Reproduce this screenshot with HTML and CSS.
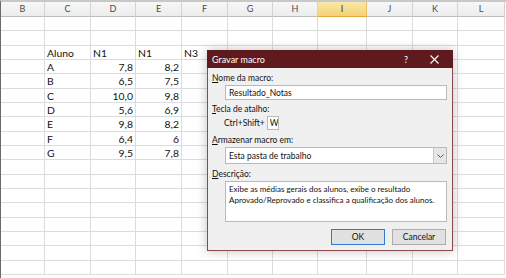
FILE: index.html
```html
<!DOCTYPE html>
<html lang="pt-BR">
<head>
  <meta charset="UTF-8" />
  <title>Gravar macro</title>
  <link rel="stylesheet" href="styles.css">
</head>
<body>
  <div class="sheet">
    <div class="col-head">
      <div>B</div><div>C</div><div>D</div><div>E</div><div>F</div><div>G</div>
      <div>H</div><div class="sel">I</div><div>J</div><div>K</div><div>L</div>
    </div>
    <div class="cells" id="cells"></div>
  </div>

  <!-- Gravar macro dialog -->
  <div class="dialog" role="dialog" aria-labelledby="dlg-title">
    <div class="title-bar">
      <span id="dlg-title">Gravar macro</span>
      <span class="help">?</span>
      <svg class="close" width="9" height="9" viewBox="0 0 9 9">
        <path d="M0.5 0.5 L8.5 8.5 M8.5 0.5 L0.5 8.5" stroke="#fff" stroke-width="1.1" fill="none"/>
      </svg>
    </div>
    <div class="dlg-body">
      <label class="lbl"><u>N</u>ome da macro:</label>
      <input class="field" type="text" value="Resultado_Notas">

      <label class="lbl"><u>T</u>ecla de atalho:</label>
      <div class="shortcut">
        <span>Ctrl+Shift+</span>
        <input class="key" type="text" value="W">
      </div>

      <label class="lbl"><u>A</u>rmazenar macro em:</label>
      <div class="select">
        <span>Esta pasta de trabalho</span>
        <span class="drop">
          <svg width="7" height="4" viewBox="0 0 7 4"><path d="M0.5 0.5 L3.5 3.5 L6.5 0.5" stroke="#555" fill="none"/></svg>
        </span>
      </div>

      <label class="lbl"><u>D</u>escrição:</label>
      <div class="desc">
        <div>Exibe as médias gerais dos alunos, exibe o resultado</div>
        <div>Aprovado/Reprovado e classifica a qualificação dos alunos.</div>
      </div>

      <div class="buttons">
        <button class="btn default">OK</button>
        <button class="btn">Cancelar</button>
      </div>
    </div>
  </div>

  <script>
    const rows = [
      [], [],
      ['', 'Aluno', 'N1', 'N1', 'N3', 'N4', 'Média', 'Resultado'],
      ['', 'A', '7,8', '8,2'],
      ['', 'B', '6,5', '7,5'],
      ['', 'C', '10,0', '9,8'],
      ['', 'D', '5,6', '6,9'],
      ['', 'E', '9,8', '8,2'],
      ['', 'F', '6,4', '6'],
      ['', 'G', '9,5', '7,8']
    ];
    const cells = document.getElementById('cells');
    for (let r = 0; r < 18; r++) {
      const data = rows[r] || [];
      for (let c = 0; c < 11; c++) {
        const cell = document.createElement('div');
        const v = data[c] || '';
        if (/^[\d,]+$/.test(v)) cell.className = 'num';
        cell.textContent = v;
        cells.appendChild(cell);
      }
    }
  </script>
</body>
</html>
```

FILE: styles.css
```css
body {
  margin: 0;
  background: #fff;
  overflow: hidden;
}
.sheet {
  border-top: 2px solid #c8c8c8;
  border-left: 1px solid #6a6a6a;
  height: 276px;
  font-family: 'Lato', 'Liberation Sans', sans-serif;
}
.col-head, .cells {
  display: grid;
  grid-template-columns: 44px 46px 45px 46px 46px 45px 45px 49px 46px 45px 47px;
}
.col-head div {
  box-sizing: border-box;
  height: 15px;
  line-height: 14px;
  text-align: center;
  font-size: 9px;
  color: #4a4a4a;
  background: linear-gradient(#f7f7f7, #ececec);
  border-right: 1px solid #d4d4d4;
  border-bottom: 1px solid #bdbdbd;
}
.col-head div.sel {
  background: linear-gradient(#fbe7a8, #f5d273);
  border-bottom: 1px solid #e2a734;
  border-right-color: #e9c064;
  color: #333;
}
.cells {
  grid-auto-rows: 14.33px;
}
.cells div {
  box-sizing: border-box;
  border-right: 1px solid #dcdcdc;
  border-bottom: 1px solid #dcdcdc;
  font-size: 10.4px;
  line-height: 15px;
  padding: 0 2px;
  color: #111;
  white-space: nowrap;
  overflow: hidden;
}
.cells div.num {
  text-align: right;
}

/* Dialog */
.dialog {
  position: absolute;
  left: 207px;
  top: 50px;
  width: 246px;
  height: 201px;
  box-sizing: border-box;
  border: 1px solid #8a4a4d;
  border-top: none;
  background: #f0f0f0;
  box-shadow: 0 0 10px rgba(0,0,0,0.25);
  font-family: 'Lato', 'Liberation Sans', sans-serif;
  font-size: 8.5px;
  color: #111;
}
.title-bar {
  height: 18px;
  margin: 0 -1px;
  background: #5f1a1e;
  color: #fff;
  display: flex;
  align-items: center;
  padding-left: 5px;
  font-size: 9px;
}
.title-bar #dlg-title {
  flex: 1;
}
.title-bar .help {
  margin-right: 22px;
  font-size: 9px;
}
.title-bar .close {
  margin-right: 14px;
}
.dlg-body {
  display: flex;
  flex-direction: column;
  padding: 5px 6px 0 4px;
}
.lbl {
  line-height: 10px;
  height: 10px;
}
.lbl u {
  text-decoration-thickness: 1px;
  text-underline-offset: 1px;
}
.field, .select, .desc {
  margin-left: 13px;
  width: 222px;
  box-sizing: border-box;
  background: #fff;
  border: 1px solid #b9b9b9;
  font-family: inherit;
  font-size: 8.5px;
  color: #111;
}
.field {
  height: 15px;
  margin-top: 2px;
  padding: 0 3px;
  margin-bottom: 4px;
}
.shortcut {
  margin-top: 2px;
  margin-left: 12px;
  height: 14px;
  display: flex;
  align-items: center;
  gap: 2px;
  margin-bottom: 5px;
}
.key {
  width: 12px;
  height: 14px;
  box-sizing: border-box;
  border: 1px solid #b9b9b9;
  background: #fff;
  padding: 0 0 0 2px;
  font-family: inherit;
  font-size: 8.5px;
  color: #111;
}
.select {
  margin-top: 2px;
  height: 17px;
  display: flex;
  align-items: center;
  padding-left: 3px;
  margin-bottom: 5px;
}
.select span:first-child {
  flex: 1;
}
.select .drop {
  width: 12px;
  height: 15px;
  background: #e6e6e6;
  border-left: 1px solid #c9c9c9;
  display: flex;
  align-items: center;
  justify-content: center;
}
.desc {
  margin-top: 2px;
  height: 41px;
  padding: 2px 3px;
  line-height: 11px;
  font-size: 8px;
  white-space: nowrap;
  overflow: hidden;
}
.buttons {
  margin-top: 7px;
  display: flex;
  justify-content: flex-end;
  gap: 7px;
}
.btn {
  width: 54px;
  height: 16px;
  box-sizing: border-box;
  border: 1px solid #adadad;
  background: #e1e1e1;
  font-family: inherit;
  font-size: 8.5px;
  color: #111;
  padding: 0;
}
.btn.default {
  border: 1px solid #2f7bd0;
}
```
